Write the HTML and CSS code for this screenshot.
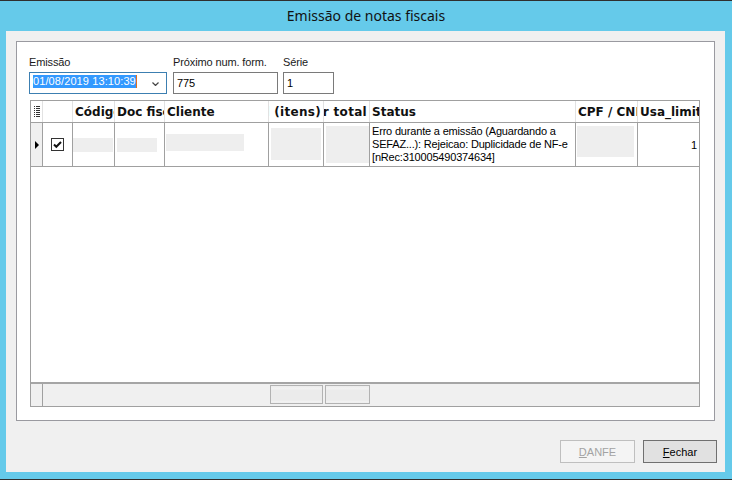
FILE: index.html
```html
<!DOCTYPE html>
<html lang="pt-BR">
<head>
  <meta charset="UTF-8">
  <title>Emissão de notas fiscais</title>
  <link rel="stylesheet" href="styles.css">
</head>
<body>
  <div class="window">
    <div class="titlebar">Emissão de notas fiscais</div>

    <div class="client">
      <div class="panel">
        <div class="fields">
          <div class="field emissao">
            <label>Emissão</label>
            <div class="combo">
              <span class="sel">01/08/2019 13:10:39</span><span class="caret"></span>
              <svg class="chevron" width="7" height="4" viewBox="0 0 7 4"><path d="M0.5 0.5 L3.5 3.5 L6.5 0.5" fill="none" stroke="#444" stroke-width="1.2"/></svg>
            </div>
          </div>
          <div class="field proximo">
            <label>Próximo num. form.</label>
            <div class="input">775</div>
          </div>
          <div class="field serie">
            <label>Série</label>
            <div class="input">1</div>
          </div>
        </div>

        <div class="grid">
          <div class="row head">
            <div class="cell ind">
              <svg width="6" height="11" viewBox="0 0 6 11">
                <g fill="#333">
                  <rect x="0" y="0" width="1" height="1"/><rect x="2" y="0" width="4" height="1"/>
                  <rect x="0" y="2" width="1" height="1"/><rect x="2" y="2" width="4" height="1"/>
                  <rect x="0" y="4" width="1" height="1"/><rect x="2" y="4" width="4" height="1"/>
                  <rect x="0" y="6" width="1" height="1"/><rect x="2" y="6" width="4" height="1"/>
                  <rect x="0" y="8" width="1" height="1"/><rect x="2" y="8" width="4" height="1"/>
                  <rect x="0" y="10" width="1" height="1"/><rect x="2" y="10" width="4" height="1"/>
                </g>
              </svg>
            </div>
            <div class="cell"></div>
            <div class="cell">Código</div>
            <div class="cell">Doc fiscal</div>
            <div class="cell">Cliente</div>
            <div class="cell num"><span>Qtd (itens)</span></div>
            <div class="cell num"><span>Valor total</span></div>
            <div class="cell">Status</div>
            <div class="cell">CPF / CNPJ</div>
            <div class="cell">Usa_limite</div>
          </div>

          <div class="row data">
            <div class="cell ind">
              <svg width="4" height="8" viewBox="0 0 4 8"><polygon points="0,0 4,4 0,8" fill="#000"/></svg>
            </div>
            <div class="cell check">
              <svg width="13" height="13" viewBox="0 0 13 13">
                <rect x="0.5" y="0.5" width="12" height="12" fill="#fff" stroke="#333"/>
                <path d="M3 6.5 L5.3 8.8 L10 4" fill="none" stroke="#111" stroke-width="2"/>
              </svg>
            </div>
            <div class="cell"><span class="blot b-codigo"></span></div>
            <div class="cell"><span class="blot b-doc"></span></div>
            <div class="cell"><span class="blot b-cliente"></span></div>
            <div class="cell"><span class="blot b-itens"></span></div>
            <div class="cell"><span class="blot b-total"></span></div>
            <div class="cell status">Erro durante a emissão (Aguardando a SEFAZ...): Rejeicao: Duplicidade de NF-e [nRec:310005490374634]</div>
            <div class="cell"><span class="blot b-cpf"></span></div>
            <div class="cell limite">1</div>
          </div>

          <div class="empty"></div>

          <div class="foot">
            <div class="foot-ind"></div>
            <div class="sum sum-itens"></div>
            <div class="sum sum-total"></div>
          </div>
        </div>
      </div>

      <div class="actions">
        <button class="btn danfe" disabled><u>D</u>ANFE</button>
        <button class="btn fechar"><u>F</u>echar</button>
      </div>
    </div>
  </div>
</body>
</html>
```

FILE: styles.css
```css
* {
  margin: 0;
  padding: 0;
  box-sizing: border-box;
}

body {
  font-family: "Liberation Sans", Arial, sans-serif;
  font-size: 11px;
  letter-spacing: -0.12px;
  color: #000;
  background: #2b2b2b;
}

.window {
  width: 732px;
  height: 480px;
  background: #65caea;
  border-top: 1px solid #2f2f2f;
  border-bottom: 1px solid #2f2f2f;
}

.titlebar {
  height: 30px;
  line-height: 30px;
  text-align: center;
  font-family: "Noto Sans", "Open Sans", sans-serif;
  font-size: 14px;
  letter-spacing: 0;
  color: #111;
}

.client {
  height: 441px;
  margin: 0 7px 0 6px;
  background: #f0f0f0;
  padding: 10px 0 0 10px;
}

.panel {
  width: 699px;
  height: 380px;
  background: #fff;
  border: 1px solid #9a9aa0;
  padding: 14px 0 0 12px;
}

/* top fields */
.fields {
  display: flex;
  margin-bottom: 6px;
}

.field label {
  display: block;
  line-height: 13px;
  margin-bottom: 3px;
  color: #1a1a1a;
}

.emissao { width: 138px; margin-right: 6px; }
.proximo { width: 105px; margin-right: 5px; }
.serie { width: 51px; }

.combo {
  height: 22px;
  border: 1px solid #3c7fb1;
  display: flex;
  align-items: flex-start;
  padding: 2px 0 0 3px;
  letter-spacing: 0.1px;
}

.combo .sel {
  background: #3399ff;
  color: #fff;
  line-height: 13px;
  height: 13px;
}

.combo .caret {
  width: 1px;
  height: 13px;
  background: #e07020;
}

.combo .chevron {
  margin: 7px 7px 0 auto;
}

.input {
  height: 22px;
  border: 1px solid #7a7a7a;
  line-height: 20px;
  padding-left: 3px;
}

/* data grid */
.grid {
  width: 670px;
  height: 307px;
  margin-left: 1px;
  border: 1px solid #a0a0a0;
  display: flex;
  flex-direction: column;
}

.row {
  display: grid;
  grid-template-columns: 12px 30px 42px 50px 104px 55px 46px 206px 62px 61px;
}

.cell {
  border-right: 1px solid #a0a0a0;
  overflow: hidden;
  white-space: nowrap;
}

.cell:last-child {
  border-right: none;
}

.head {
  height: 22px;
  border-bottom: 1px solid #a0a0a0;
}

.head .cell {
  font-family: "DejaVu Sans", sans-serif;
  font-weight: bold;
  font-size: 12px;
  letter-spacing: 0;
  line-height: 22px;
  padding-left: 2px;
  color: #111;
  border-right-color: #e2e2e2;
}

/* right-aligned headers spill out on the left */
.head .cell.num {
  display: flex;
  justify-content: flex-end;
  padding: 0 2px 0 0;
  letter-spacing: 0.3px;
}

.head .ind {
  display: flex;
  align-items: center;
  justify-content: center;
  padding: 0;
}

.data {
  height: 44px;
  border-bottom: 1px solid #a0a0a0;
}

.data .ind {
  background: #f0f0f0;
  display: flex;
  align-items: center;
  justify-content: center;
}

.data .check {
  display: flex;
  align-items: center;
  justify-content: center;
}

.status {
  white-space: normal;
  line-height: 13px;
  padding: 2px 0 0 2px;
  letter-spacing: -0.18px;
}

.limite {
  display: flex;
  align-items: center;
  justify-content: flex-end;
  padding-right: 2px;
}

/* hidden values in the row */
.blot {
  display: block;
  background: #eeeeee;
}

.b-codigo { margin: 15px 0 0 0; width: 40px; height: 14px; }
.b-doc { margin: 15px 0 0 2px; width: 40px; height: 14px; }
.b-cliente { margin: 11px 0 0 1px; width: 78px; height: 17px; }
.b-itens { margin: 5px 0 0 2px; width: 50px; height: 32px; }
.b-total { margin: 3px 0 0 2px; width: 44px; height: 37px; }
.b-cpf { margin: 3px 0 0 1px; width: 57px; height: 31px; }

.empty {
  flex: 1;
  background: #fff;
}

.foot {
  height: 24px;
  border-top: 2px solid #a5a5a5;
  background: #f0f0f0;
  display: flex;
}

.foot-ind {
  width: 12px;
  border-right: 1px solid #a0a0a0;
}

.sum {
  height: 19px;
  margin-top: 1px;
  border: 1px solid #b2b2b2;
  background: linear-gradient(#ececec, #f3f3f3 3px, #ebebeb 4px, #ebebeb 14px, #f3f3f3 16px, #ececec);
}

.sum-itens { width: 53px; margin-left: 227px; }
.sum-total { width: 45px; margin-left: 2px; }

/* dialog buttons */
.actions {
  display: flex;
  justify-content: flex-end;
  gap: 8px;
  margin-top: 19px;
  padding-right: 8px;
}

.btn {
  height: 23px;
  font-family: "Liberation Sans", Arial, sans-serif;
  font-size: 11px;
  border: 1px solid #707070;
  background: #e1e1e1;
  color: #000;
}

.btn u {
  text-decoration: underline;
}

.danfe {
  width: 75px;
  border-color: #bfbfbf;
  background: #f4f4f4;
  color: #a3a3a3;
}

.fechar {
  width: 74px;
}
```
